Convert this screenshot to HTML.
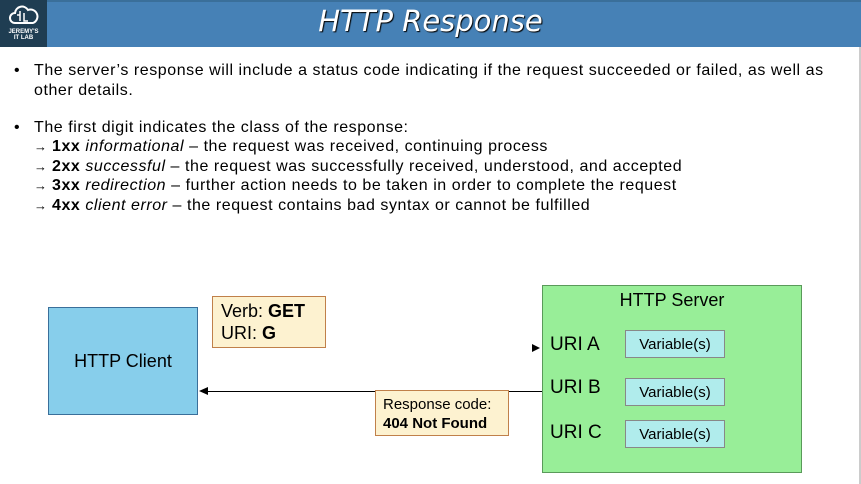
<!DOCTYPE html>
<html><head><style>
body{margin:0;width:861px;height:484px;background:#fff;position:relative;overflow:hidden;font-family:"Liberation Sans",sans-serif;color:#000}
.a{position:absolute}
.hdr{left:0;top:0;width:861px;height:47px;background:#4681b6;border-top:2px solid #3a6f9a;box-sizing:border-box}
.logo{left:0;top:0;width:47px;height:47px;background:#1f3d52;color:#fff;font-size:6px;text-align:center;font-weight:bold}
.t{left:0;width:861px;top:4px;text-align:center;color:#fff;font-family:"DejaVu Sans",sans-serif;font-style:italic;font-size:29px;text-shadow:1px 1px 1px #000}
.txt{font-size:16px;line-height:19.5px;letter-spacing:0.55px;white-space:nowrap}
.ar{display:inline-block;width:18px;font-size:13px;letter-spacing:0}
.box{border:1px solid #c0804a;background:#fdf2d0}
</style></head><body>
<div class="a hdr"></div>
<div class="a logo"><svg width="30" height="24" viewBox="0 0 30 24" style="margin-top:3px"><path d="M6 20a5 5 0 0 1 0-10a7 7 0 0 1 13-3a6 6 0 0 1 5 13z" fill="none" stroke="#fff" stroke-width="2"/><path d="M11 8v10M15 10v8h4M11 12h-3" stroke="#fff" stroke-width="1.5" fill="none"/></svg><div style="line-height:6px">JEREMY'S<br>IT LAB</div></div>
<div class="a t">HTTP Response</div>
<div class="a" style="left:859px;top:47px;width:2px;height:437px;background:#ccc"></div>
<div class="a txt" style="left:14px;top:61px">•</div>
<div class="a txt" style="left:34px;top:61px">The server’s response will include a status code indicating if the request succeeded or failed, as well as<br>other details.</div>
<div class="a txt" style="left:14px;top:118px">•</div>
<div class="a txt" style="left:34px;top:118px">The first digit indicates the class of the response:</div>
<div class="a txt" style="left:34px;top:137px"><span class="ar">→</span><b>1xx</b> <i>informational</i> – the request was received, continuing process</div>
<div class="a txt" style="left:34px;top:156.5px"><span class="ar">→</span><b>2xx</b> <i>successful</i> – the request was successfully received, understood, and accepted</div>
<div class="a txt" style="left:34px;top:176px"><span class="ar">→</span><b>3xx</b> <i>redirection</i> – further action needs to be taken in order to complete the request</div>
<div class="a txt" style="left:34px;top:195.5px"><span class="ar">→</span><b>4xx</b> <i>client error</i> – the request contains bad syntax or cannot be fulfilled</div>
<div class="a" style="left:48px;top:307px;width:150px;height:108px;background:#87ceeb;border:1px solid #3a6f9a;box-sizing:border-box;font-size:18px;text-align:center;line-height:106px">HTTP Client</div>
<div class="a box" style="left:212px;top:296px;width:114px;height:52px;font-size:18px;line-height:22px;padding:3px 0 0 8px;box-sizing:border-box">Verb: <b>GET</b><br>URI: <b>G</b></div>
<div class="a" style="left:542px;top:285px;width:260px;height:188px;background:#98ee98;border:1px solid #5a9a5a;box-sizing:border-box"></div>
<div class="a" style="left:542px;top:290px;width:260px;text-align:center;font-size:18px">HTTP Server</div>
<div class="a" style="left:550px;top:334px;font-size:19px;line-height:22px">URI A</div>
<div class="a" style="left:550px;top:377px;font-size:19px;line-height:22px">URI B</div>
<div class="a" style="left:550px;top:422px;font-size:19px;line-height:22px">URI C</div>
<div class="a" style="left:532px;top:344px;width:0;height:0;border-left:8px solid #000;border-top:4px solid transparent;border-bottom:4px solid transparent"></div>
<div class="a" style="left:625px;top:330px;width:100px;height:28px;background:#b0ecec;border:1px solid #888;box-sizing:border-box;font-size:15px;text-align:center;line-height:28px">Variable(s)</div>
<div class="a" style="left:625px;top:378px;width:100px;height:28px;background:#b0ecec;border:1px solid #888;box-sizing:border-box;font-size:15px;text-align:center;line-height:28px">Variable(s)</div>
<div class="a" style="left:625px;top:420px;width:100px;height:28px;background:#b0ecec;border:1px solid #888;box-sizing:border-box;font-size:15px;text-align:center;line-height:28px">Variable(s)</div>
<div class="a" style="left:206px;top:391px;width:336px;height:1px;background:#000"></div>
<div class="a" style="left:199px;top:387px;width:0;height:0;border-right:9px solid #000;border-top:4px solid transparent;border-bottom:4px solid transparent"></div>
<div class="a box" style="left:375px;top:390px;width:134px;height:46px;font-size:15px;line-height:19px;padding:4px 0 0 7px;box-sizing:border-box">Response code:<br><b>404 Not Found</b></div>
</body></html>
